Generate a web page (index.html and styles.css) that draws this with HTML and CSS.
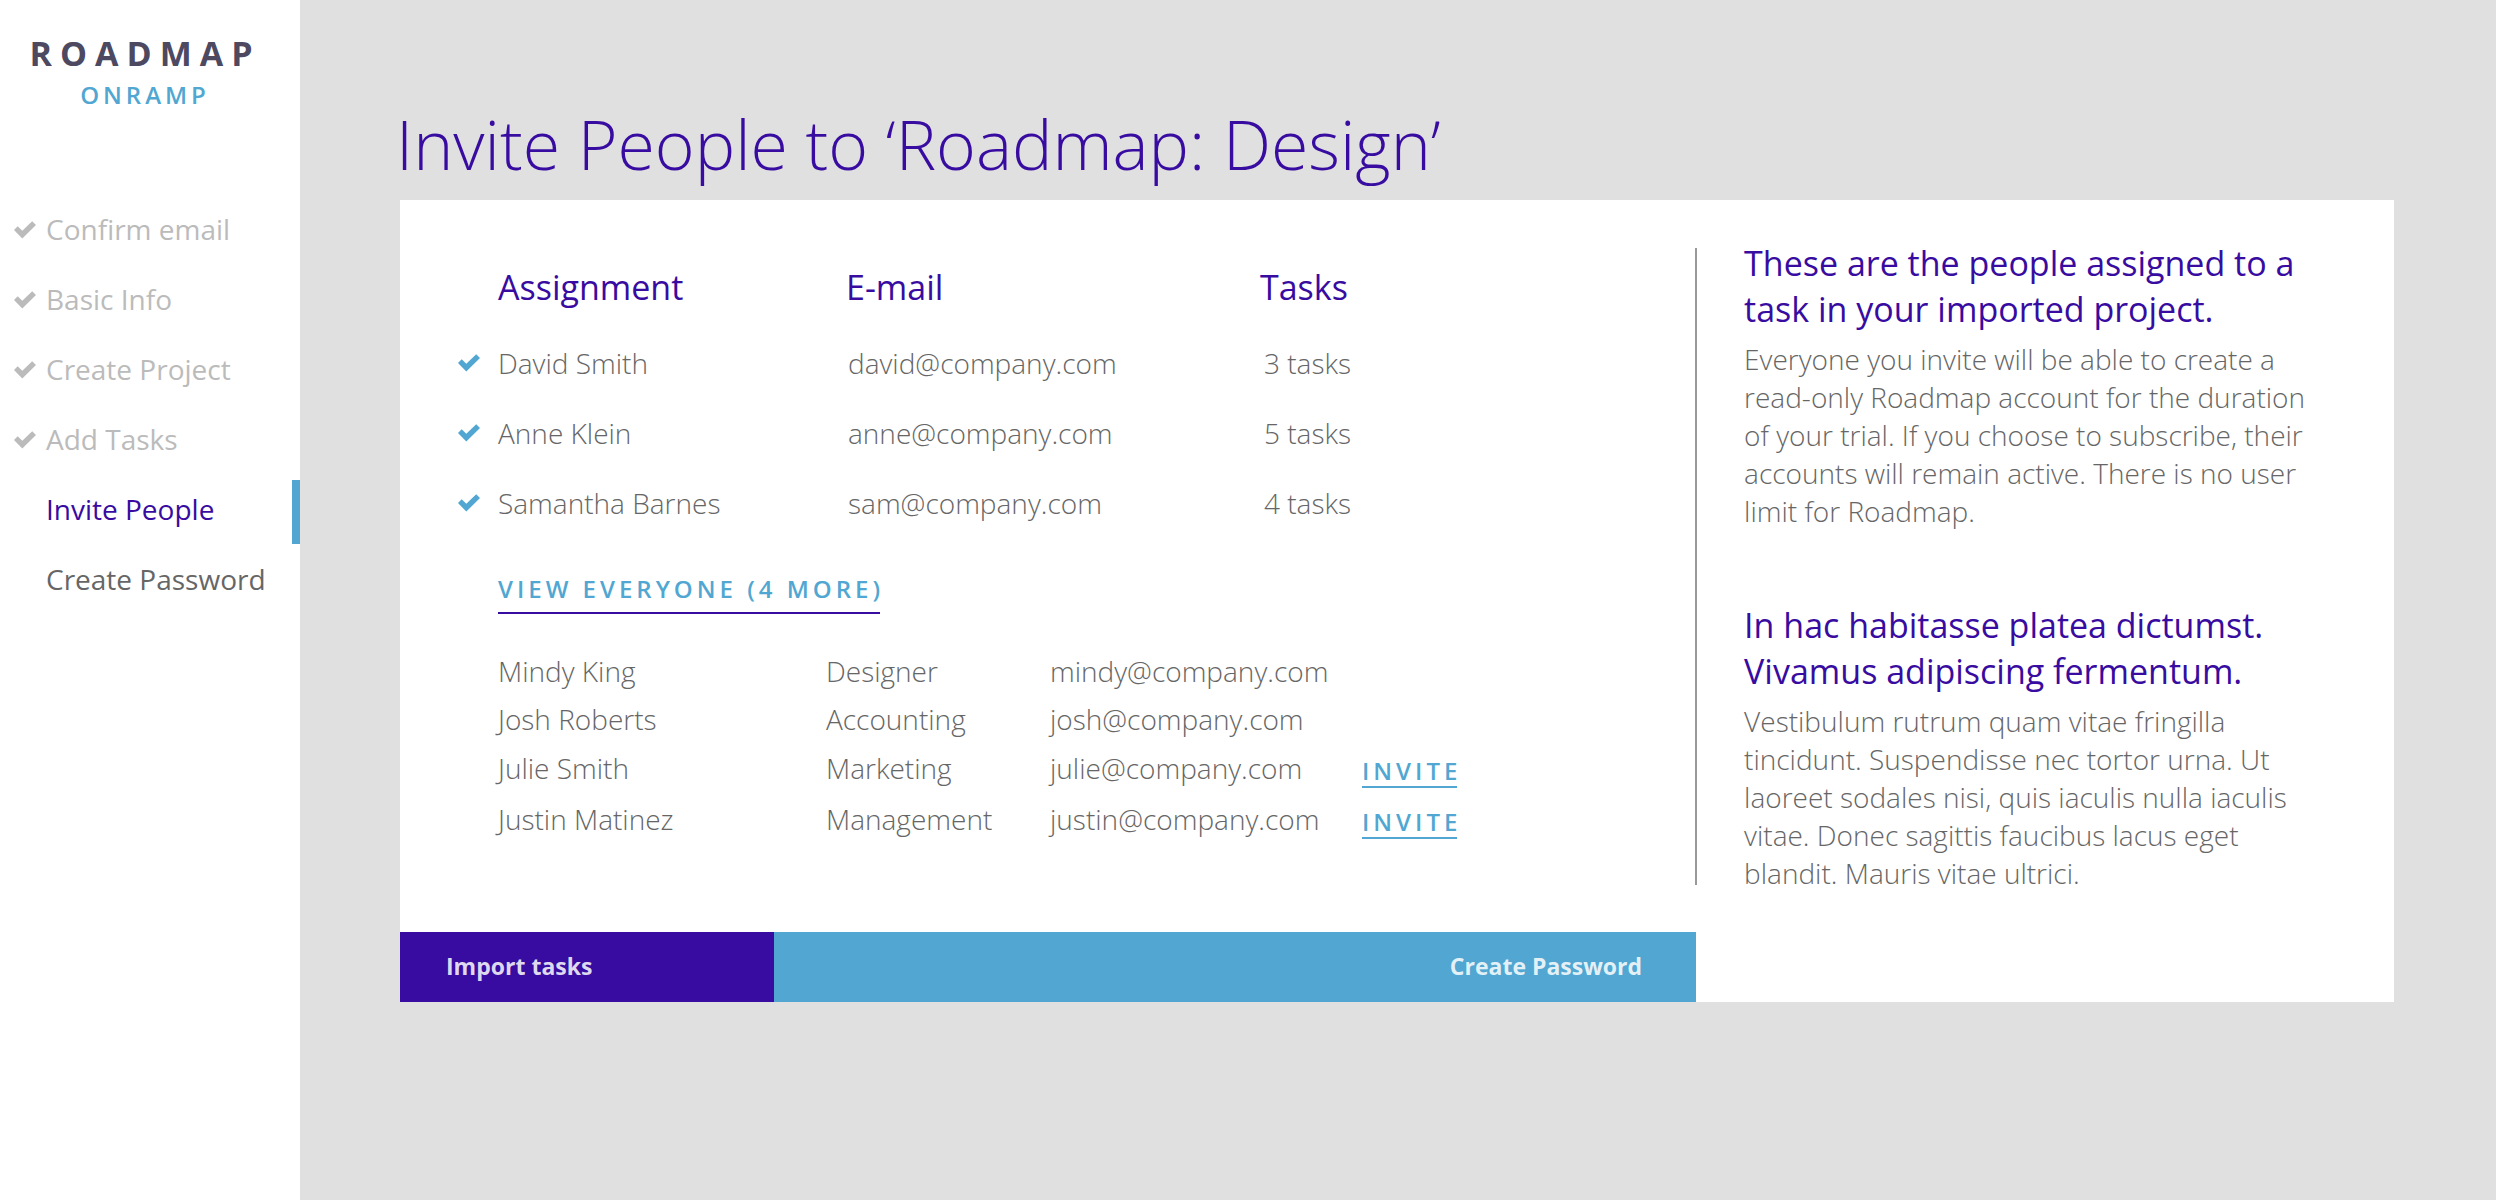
FILE: index.html
```html
<!DOCTYPE html>
<html lang="en">
<head>
<meta charset="utf-8">
<meta name="viewport" content="width=device-width, initial-scale=1">
<title>Roadmap Onramp – Invite People</title>
<link rel="stylesheet" href="styles.css">
</head>
<body>
<svg class="sprite" aria-hidden="true">
  <symbol id="check" viewBox="0 0 22 18">
    <path d="M3.7 5.2 8.3 9.7 18.2 0.2 22 4 8.3 17.6 0 9Z"/>
  </symbol>
</svg>
<div class="app">
  <aside class="sidebar">
    <div class="logo">
      <span class="logo-name">ROADMAP</span>
      <span class="logo-sub">ONRAMP</span>
    </div>
    <nav class="steps" aria-label="Setup steps">
      <a class="step done" href="#"><svg class="check"><use href="#check"/></svg>Confirm email</a>
      <a class="step done" href="#"><svg class="check"><use href="#check"/></svg>Basic Info</a>
      <a class="step done" href="#"><svg class="check"><use href="#check"/></svg>Create Project</a>
      <a class="step done" href="#"><svg class="check"><use href="#check"/></svg>Add Tasks</a>
      <a class="step active" href="#" aria-current="step">Invite People</a>
      <a class="step" href="#">Create Password</a>
    </nav>
  </aside>

  <main class="content">
    <h1 class="title">Invite People to ‘Roadmap: Design’</h1>
    <div class="panel">
      <section class="people">
        <div class="lists">
          <table class="assigned">
            <colgroup><col class="c-check"><col class="c-name"><col class="c-mail"><col></colgroup>
            <thead>
              <tr><td></td><th scope="col">Assignment</th><th scope="col">E-mail</th><th scope="col">Tasks</th></tr>
            </thead>
            <tbody>
              <tr><td><svg class="check"><use href="#check"/></svg></td><td>David Smith</td><td class="mail">david@company.com</td><td class="tasks">3 tasks</td></tr>
              <tr><td><svg class="check"><use href="#check"/></svg></td><td>Anne Klein</td><td class="mail">anne@company.com</td><td class="tasks">5 tasks</td></tr>
              <tr><td><svg class="check"><use href="#check"/></svg></td><td>Samantha Barnes</td><td class="mail">sam@company.com</td><td class="tasks">4 tasks</td></tr>
            </tbody>
          </table>
          <a class="view-all" href="#"><span class="spaced">VIEW EVERYONE (4 MORE)</span></a>
          <table class="others">
            <colgroup><col class="c-person"><col class="c-role"><col class="c-address"><col></colgroup>
            <tbody>
              <tr><td>Mindy King</td><td>Designer</td><td>mindy@company.com</td><td></td></tr>
              <tr><td>Josh Roberts</td><td>Accounting</td><td>josh@company.com</td><td></td></tr>
              <tr class="invitable"><td>Julie Smith</td><td>Marketing</td><td>julie@company.com</td><td><button class="invite" type="button"><span class="spaced">INVITE</span></button></td></tr>
              <tr class="invitable"><td>Justin Matinez</td><td>Management</td><td>justin@company.com</td><td><button class="invite" type="button"><span class="spaced">INVITE</span></button></td></tr>
            </tbody>
          </table>
        </div>
        <div class="actions">
          <button class="action back" type="button">Import tasks</button>
          <button class="action next" type="button">Create Password</button>
        </div>
      </section>
      <aside class="help">
        <div class="help-text">
          <section class="note">
            <h2>These are the people assigned to a task in your imported project.</h2>
            <p>Everyone you invite will be able to create a read-only Roadmap account for the duration of your trial. If you choose to subscribe, their accounts will remain active. There is no user limit for Roadmap.</p>
          </section>
          <section class="note">
            <h2>In hac habitasse platea dictumst. Vivamus adipiscing fermentum.</h2>
            <p>Vestibulum rutrum quam vitae fringilla tincidunt. Suspendisse nec tortor urna. Ut laoreet sodales nisi, quis iaculis nulla iaculis vitae. Donec sagittis faucibus lacus eget blandit. Mauris vitae ultrici.</p>
          </section>
        </div>
      </aside>
    </div>
  </main>
</div>
</body>
</html>
```
FILE: styles.css
```css
:root {
  --purple: #380ca0;
  --blue: #51a7d1;
  --ink: #666666;
  --muted: #bbbbbb;
}

* { box-sizing: border-box; }

body {
  margin: 0;
  background: #e0e0e0;
  color: var(--ink);
  font: 300 28px/38px "Open Sans", "Noto Sans", sans-serif;
}

h1, h2, p { margin: 0; }
a { color: inherit; text-decoration: none; }

button {
  border: 0;
  padding: 0;
  background: none;
  font: inherit;
  cursor: pointer;
}

table {
  width: 100%;
  border-collapse: collapse;
  table-layout: fixed;
}

th, td {
  padding: 0;
  text-align: left;
  white-space: nowrap;
}

.sprite { display: none; }

.check {
  display: block;
  flex: none;
  width: 22px;
  height: 18px;
  fill: currentColor;
}

.app {
  display: flex;
  min-height: 100vh;
}

/* Sidebar */
.sidebar {
  flex: none;
  width: 300px;
  background: #fff;
}

.logo {
  display: flex;
  flex-direction: column;
  align-items: center;
  padding: 30px 10px 86px 0;
}

.logo-name {
  color: #4c4961;
  font-size: 34px;
  font-weight: 700;
  line-height: 46px;
  letter-spacing: 8px;
}

.logo-sub {
  color: var(--blue);
  font-size: 24px;
  font-weight: 600;
  line-height: 38px;
  letter-spacing: 4px;
}

.steps {
  display: flex;
  flex-direction: column;
  gap: 6px;
}

.step {
  display: flex;
  align-items: center;
  gap: 10px;
  height: 64px;
  padding: 0 0 6px 46px;
  font-weight: 400;
  white-space: nowrap;
}

.step.done {
  padding-left: 14px;
  color: var(--muted);
}

.step .check { margin-top: 2px; }

.step.active {
  border-right: 8px solid var(--blue);
  color: var(--purple);
}

/* Main column */
.content {
  flex: 1;
  min-width: 0;
  padding: 96px 102px 98px 100px;
}

.title {
  margin: 0 0 8px -4px;
  color: var(--purple);
  font-size: 68px;
  font-weight: 300;
  line-height: 96px;
}

.panel {
  display: grid;
  grid-template-columns: 65fr 35fr;
  background: #fff;
}

.people {
  display: flex;
  flex-direction: column;
  min-width: 0;
}

.lists {
  flex: 1;
  padding: 64px 58px 87px;
}

.c-check { width: 40px; }
.c-name { width: 348px; }
.c-mail { width: 414px; }
.c-person { width: 328px; }
.c-role { width: 224px; }
.c-address { width: 312px; }

.assigned th {
  height: 64px;
  padding-bottom: 18px;
  color: var(--purple);
  font-size: 34px;
  font-weight: 400;
  line-height: 46px;
}

.assigned tbody tr { height: 70px; }
.assigned .check { color: var(--blue); }
.assigned .mail { padding-left: 2px; }
.assigned .tasks { padding-left: 4px; }

/* Tracked-out labels: the underline stops at the last letter */
.spaced {
  margin-right: -4px;
  letter-spacing: 4px;
  white-space: nowrap;
}

.view-all {
  display: inline-block;
  margin: 34px 0 33px 40px;
  padding-bottom: 6px;
  border-bottom: 2px solid var(--purple);
  color: var(--blue);
  font-size: 24px;
  font-weight: 600;
  line-height: 34px;
  vertical-align: top;
}

.others {
  width: calc(100% - 40px);
  margin-left: 40px;
}

.others tr { height: 48px; }
.others .invitable { height: 51px; }
.others .invitable td { padding-bottom: 1px; }

.invite {
  display: block;
  margin-top: 8px;
  border-bottom: 2px solid var(--blue);
  color: var(--blue);
  font-size: 24px;
  font-weight: 600;
  line-height: 30px;
}

.actions {
  display: flex;
  height: 70px;
}

.action {
  padding-bottom: 2px;
  color: rgba(255, 255, 255, 0.85);
  font-size: 23px;
  font-weight: 700;
}

.back {
  flex: none;
  width: 374px;
  padding-left: 46px;
  background: var(--purple);
  text-align: left;
}

.next {
  flex: 1;
  padding-right: 54px;
  background: var(--blue);
  text-align: right;
}

/* Help column */
.help {
  display: flex;
  min-width: 0;
}

.help::before {
  content: "";
  flex: none;
  width: 2px;
  margin: 48px 0 117px -1px;
  background: #999999;
}

.help-text {
  display: flex;
  flex-direction: column;
  gap: 72px;
  padding: 40px 80px 110px 47px;
}

.note h2 {
  margin-bottom: 8px;
  color: var(--purple);
  font-size: 34px;
  font-weight: 400;
  line-height: 46px;
}
```
